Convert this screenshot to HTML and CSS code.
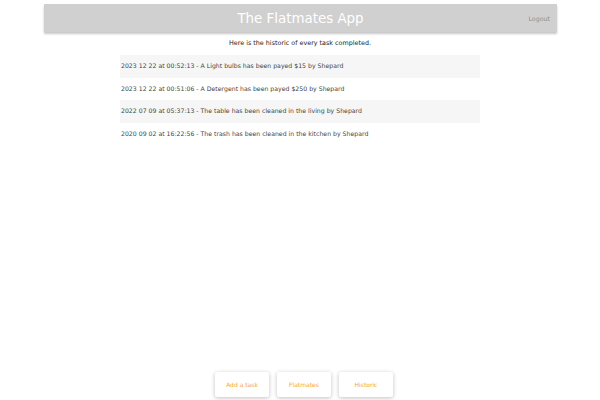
FILE: index.html
```html
<!DOCTYPE html>
<html>
<head>
<meta charset="utf-8">
<link rel="stylesheet" href="styles.css">
</head>
<body>
<header class="topbar">
  <span class="spacer"></span>
  <h1 class="title">The Flatmates App</h1>
  <a class="logout">Logout</a>
</header>
<main class="content">
  <p class="intro">Here is the historic of every task completed.</p>
  <ul class="history">
    <li class="entry">2023 12 22 at 00:52:13 - A Light bulbs has been payed $15 by Shepard</li>
    <li class="entry">2023 12 22 at 00:51:06 - A Detergent has been payed $250 by Shepard</li>
    <li class="entry">2022 07 09 at 05:37:13 - The table has been cleaned in the living by Shepard</li>
    <li class="entry">2020 09 02 at 16:22:56 - The trash has been cleaned in the kitchen by Shepard</li>
  </ul>
</main>
<nav class="actions">
  <button class="action">Add a task</button>
  <button class="action">Flatmates</button>
  <button class="action">Historic</button>
</nav>
</body>
</html>
```
FILE: styles.css
```css
html, body {
  margin: 0;
  height: 100%;
}
body {
  font-family: "DejaVu Sans", sans-serif;
  color: #333;
  background: #fff;
  display: flex;
  flex-direction: column;
}
.topbar {
  margin: 4px 43px 0 44px;
  height: 28px;
  background: #d0d0d0;
  box-shadow: 0 2px 2px rgba(0,0,0,0.22);
  display: grid;
  grid-template-columns: 1fr auto 1fr;
  align-items: center;
}
.title {
  margin: 0;
  font-weight: normal;
  font-size: 13.4px;
  color: #fff;
}
.logout {
  justify-self: end;
  padding-right: 7px;
  font-size: 6.3px;
  color: #8f8f8f;
}
.content {
  width: 360px;
  margin: 0 auto;
}
.intro {
  margin: 3px 0 0;
  height: 20px;
  line-height: 16px;
  text-align: center;
  font-size: 6.4px;
  color: #222;
}
.history {
  list-style: none;
  margin: 0;
  padding: 0;
}
.entry {
  height: 22.5px;
  line-height: 22.5px;
  padding-left: 1px;
  font-size: 6.2px;
  color: #444;
}
.entry:nth-child(odd) {
  background: #f6f6f6;
}
.actions {
  margin-top: auto;
  margin-bottom: 3px;
  padding-left: 8px;
  display: flex;
  justify-content: center;
  gap: 8px;
}
.action {
  width: 54px;
  height: 25px;
  background: #fff;
  border: none;
  border-radius: 2px;
  box-shadow: 0 1px 4px rgba(0,0,0,0.25);
  font-family: "DejaVu Sans", sans-serif;
  font-size: 6px;
  color: #f5a23c;
  padding: 0;
}
```
